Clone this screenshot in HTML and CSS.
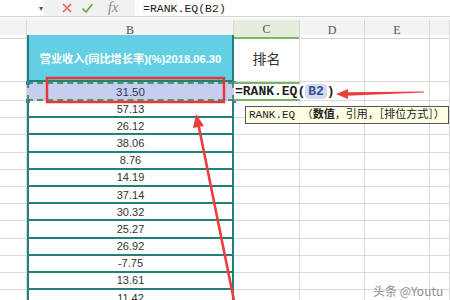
FILE: index.html
```html
<!DOCTYPE html>
<html lang="zh-CN">
<head>
    <meta charset="UTF-8">
    <title>RANK.EQ</title>
    <link rel="stylesheet" href="styles.css">
</head>
<body>
    <div class="formula-bar">
        <div class="name-box"><span class="drop">&#9662;</span></div>
        <div class="bar-tools">
            <svg class="tool" width="12" height="12" viewBox="0 0 12 12"><path d="M2 2L10 10M10 2L2 10" stroke="#e06464" stroke-width="1.6" fill="none"/></svg>
            <svg class="tool" width="13" height="12" viewBox="0 0 13 12"><path d="M1.5 6.5L5 10L11.5 2" stroke="#6aab4c" stroke-width="1.7" fill="none"/></svg>
            <span class="fx">fx</span>
        </div>
        <div class="formula-input">=RANK.EQ(B2)</div>
    </div>
    <div class="spacer"></div>

    <div class="sheet">
        <div class="row col-head">
            <div class="cell"></div>
            <div class="cell">B</div>
            <div class="cell active">C</div>
            <div class="cell">D</div>
            <div class="cell">E</div>
            <div class="cell"></div>
        </div>
        <div class="row title-row">
            <div class="cell"></div>
            <div class="cell b title">营业收入(同比增长率)(%)2018.06.30</div>
            <div class="cell rank">排名</div>
            <div class="cell"></div>
            <div class="cell"></div>
            <div class="cell"></div>
        </div>
        <div class="row edit-row">
            <div class="cell"></div>
            <div class="cell b copied">31.50</div>
            <div class="cell editing"><span class="edit-text">=RANK.EQ(<span class="ref">B2</span>)</span></div>
            <div class="cell"></div>
            <div class="cell"></div>
            <div class="cell"></div>
        </div>
        <div class="row"><div class="cell"></div><div class="cell b">57.13</div><div class="cell"></div><div class="cell"></div><div class="cell"></div><div class="cell"></div></div>
        <div class="row"><div class="cell"></div><div class="cell b">26.12</div><div class="cell"></div><div class="cell"></div><div class="cell"></div><div class="cell"></div></div>
        <div class="row"><div class="cell"></div><div class="cell b">38.06</div><div class="cell"></div><div class="cell"></div><div class="cell"></div><div class="cell"></div></div>
        <div class="row"><div class="cell"></div><div class="cell b">8.76</div><div class="cell"></div><div class="cell"></div><div class="cell"></div><div class="cell"></div></div>
        <div class="row"><div class="cell"></div><div class="cell b">14.19</div><div class="cell"></div><div class="cell"></div><div class="cell"></div><div class="cell"></div></div>
        <div class="row"><div class="cell"></div><div class="cell b">37.14</div><div class="cell"></div><div class="cell"></div><div class="cell"></div><div class="cell"></div></div>
        <div class="row"><div class="cell"></div><div class="cell b">30.32</div><div class="cell"></div><div class="cell"></div><div class="cell"></div><div class="cell"></div></div>
        <div class="row"><div class="cell"></div><div class="cell b">25.27</div><div class="cell"></div><div class="cell"></div><div class="cell"></div><div class="cell"></div></div>
        <div class="row"><div class="cell"></div><div class="cell b">26.92</div><div class="cell"></div><div class="cell"></div><div class="cell"></div><div class="cell"></div></div>
        <div class="row"><div class="cell"></div><div class="cell b">-7.75</div><div class="cell"></div><div class="cell"></div><div class="cell"></div><div class="cell"></div></div>
        <div class="row"><div class="cell"></div><div class="cell b">13.61</div><div class="cell"></div><div class="cell"></div><div class="cell"></div><div class="cell"></div></div>
        <div class="row"><div class="cell"></div><div class="cell b">11.42</div><div class="cell"></div><div class="cell"></div><div class="cell"></div><div class="cell"></div></div>
    </div>

    <!-- tooltip of the function being typed -->
    <div class="tip">RANK.EQ （<b>数值</b>，引用，［排位方式］）</div>

    <!-- red marks drawn over the sheet -->
    <svg class="marks" width="450" height="300" viewBox="0 0 450 300">
        <rect x="26" y="81" width="4" height="4" fill="#4a78c0"/>
        <rect x="232" y="81" width="4" height="4" fill="#4a78c0"/>
        <rect x="26" y="99" width="4" height="4" fill="#4a78c0"/>
        <rect x="232" y="99" width="4" height="4" fill="#4a78c0"/>
        <rect x="47" y="78" width="177" height="24" fill="none" stroke="#e6383a" stroke-width="2.5"/>
        <line x1="234.5" y1="303" x2="198.5" y2="125" stroke="#ec3d3f" stroke-width="2.6"/>
        <polygon points="196,114 204,126 193,128" fill="#ec3d3f"/>
        <polygon points="347,92.3 424,91.6 424,92.6 347,95.7" fill="#ec3d3f"/>
        <polygon points="336,94 348,89 348,99" fill="#ec3d3f"/>
    </svg>

    <div class="watermark">头条 @Youtu</div>
</body>
</html>
```

FILE: styles.css
```css
* {
    margin: 0;
    padding: 0;
    box-sizing: border-box;
}

body {
    width: 450px;
    height: 300px;
    overflow: hidden;
    position: relative;
    background: #fff;
    color: #333;
    font-family: "Liberation Sans", "Noto Sans CJK SC", sans-serif;
}

.formula-bar {
    display: flex;
    height: 17px;
    border-bottom: 1px solid #d6d6d6;
    background: #f1f1f1;
}

.name-box {
    width: 44px;
    background: #fff;
    display: flex;
    justify-content: flex-end;
    align-items: center;
    padding-right: 1px;
}

.drop {
    font-size: 8px;
    color: #555;
}

.bar-tools {
    width: 91px;
    display: flex;
    align-items: center;
    padding-left: 17px;
    gap: 8px;
}

.fx {
    font-family: "Liberation Serif", serif;
    font-style: italic;
    font-size: 14px;
    color: #8a8a8a;
    margin-left: 6px;
    line-height: 1;
}

.formula-input {
    flex: 1;
    background: #fff;
    padding-left: 8px;
    font-family: "Liberation Mono", monospace;
    font-size: 11.5px;
    line-height: 17px;
    color: #222;
}

.spacer {
    height: 3px;
    background: #f7f7f7;
}

.row {
    display: grid;
    grid-template-columns: 27px 207px 66px 65px 65px 1fr;
    height: 17.2px;
}

.cell {
    border-right: 1px solid #dadada;
    border-bottom: 1px solid #dadada;
    font-size: 11px;
    display: flex;
    align-items: center;
    justify-content: center;
    white-space: nowrap;
}

.col-head {
    height: 15px;
    background: #f3f3f3;
}

.col-head .cell {
    font-family: "Liberation Serif", serif;
    font-size: 12px;
    color: #555;
    border-color: #d8d8d8;
    padding-top: 2px;
}

.col-head .active {
    background: #e4eddc;
    border-bottom: 2px solid #7db765;
}

.title-row {
    height: 47px;
}

.edit-row {
    height: 19px;
}

.b {
    border-left: 2px solid #22807c;
    border-right: 2px solid #22807c;
    border-bottom: 2px solid #22807c;
    color: #333;
}

.title {
    background: #63cfe4;
    color: #fff;
    font-weight: bold;
    font-size: 11.2px;
}

.rank {
    font-family: "Noto Sans CJK SC", sans-serif;
    font-size: 14px;
    color: #333;
}

.copied {
    background: #c7cdef;
    border: 2px dashed #4e9a52;
    color: #2a3566;
    font-size: 11.5px;
}

.editing {
    border-top: 2px solid #78b463;
    border-bottom: 2px solid #78b463;
    justify-content: flex-start;
    overflow: visible;
    position: relative;
    z-index: 1;
}

.edit-text {
    background: #fff;
    font-family: "Liberation Mono", monospace;
    font-weight: bold;
    font-size: 13px;
    color: #1e1e1e;
    padding-left: 1px;
}

.ref {
    background: #cfdcf3;
    border-radius: 4px;
    padding: 0 3px;
    color: #3b4f8c;
}

.tip {
    position: absolute;
    left: 245px;
    top: 106px;
    height: 18px;
    padding: 0 3px;
    border: 1px solid #555;
    background: #ffffe3;
    font-family: "Liberation Mono", "Noto Sans CJK SC", monospace;
    font-size: 11px;
    line-height: 16px;
    color: #222;
    white-space: nowrap;
}

.marks {
    position: absolute;
    left: 0;
    top: 0;
    pointer-events: none;
}

.watermark {
    position: absolute;
    left: 373px;
    top: 282px;
    font-size: 12px;
    color: #8c8c8c;
    font-family: "Noto Sans CJK SC", sans-serif;
}
```
